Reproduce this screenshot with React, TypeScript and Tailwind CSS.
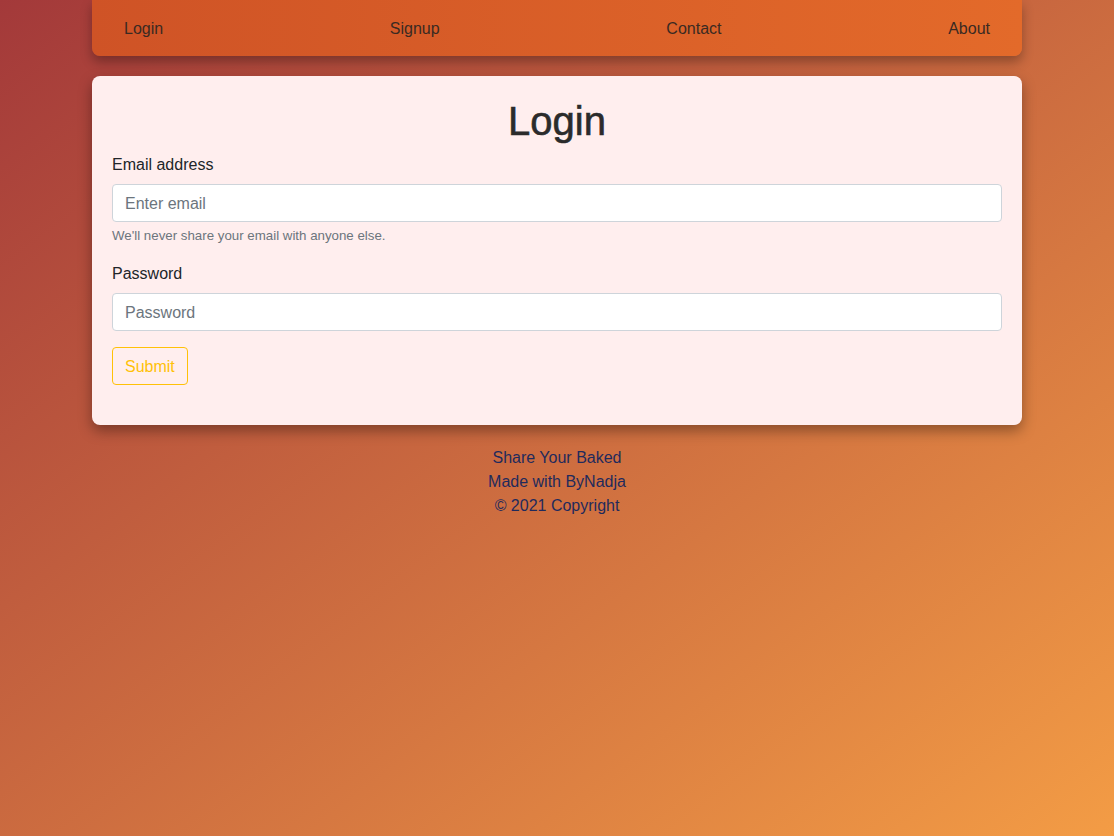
export default function App() {
  return (
    <div
      className="min-h-[836px] w-full bg-[linear-gradient(to_bottom_right,#a3393a,#f39c45)] text-[#212529]"
      style={{ fontFamily: '"Liberation Sans", Arial, sans-serif' }}
    >
      <div className="mx-auto w-[930px]">
        <nav className="flex h-[56px] items-center justify-between rounded-b-lg bg-[linear-gradient(to_right,#cf5326,#e36a2a)] px-8 pt-[2px] text-[16px] text-[#3a2a22] shadow-[0_6px_12px_rgba(0,0,0,0.3)]">
          <span>Login</span>
          <span>Signup</span>
          <span>Contact</span>
          <span>About</span>
        </nav>
        <div className="mt-5 rounded-lg bg-[#ffeeee] px-5 pb-[40px] pt-[21px] shadow-[0_6px_14px_rgba(0,0,0,0.35)]">
          <h1 className="mb-2 text-center text-[40px] font-medium leading-[48px] text-[#2b2b2b] [-webkit-text-stroke:0.6px_#2b2b2b]">Login</h1>
          <div className="mb-4">
            <label className="mb-[7px] block text-[16px] leading-6">Email address</label>
            <div className="flex h-[38px] items-center rounded border border-[#ced4da] bg-white px-3 pt-[2px] text-[16px] text-[#6c757d]">
              Enter email
            </div>
            <div className="mt-1 text-[13.3px] leading-[19px] text-[#6c757d]">We'll never share your email with anyone else.</div>
          </div>
          <div className="mb-4">
            <label className="mb-[7px] block pt-[1px] text-[16px] leading-6">Password</label>
            <div className="flex h-[38px] items-center rounded border border-[#ced4da] bg-white px-3 pt-[2px] text-[16px] text-[#6c757d]">
              Password
            </div>
          </div>
          <button className="h-[38px] rounded border border-[#ffc107] px-3 pt-[2px] text-[16px] text-[#ffc107]">Submit</button>
        </div>
        <footer className="mt-[21px] text-center text-[16px] leading-6 text-[#1f2a5c]">
          <div>Share Your Baked</div>
          <div>Made with ByNadja</div>
          <div>© 2021 Copyright</div>
        </footer>
      </div>
    </div>
  );
}
